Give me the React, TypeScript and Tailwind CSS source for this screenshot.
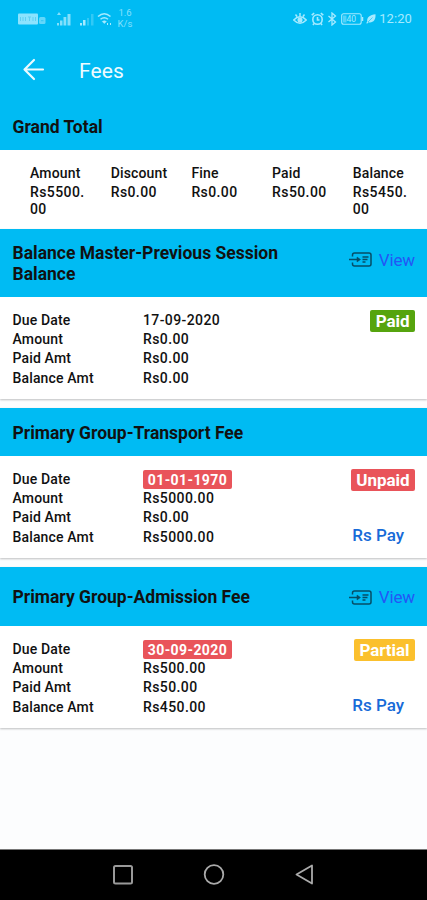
type Status = "Paid" | "Unpaid" | "Partial";

type Fee = {
  title: string;
  dueDate: string;
  overdue: boolean;
  amount: string;
  paid: string;
  balance: string;
  status: Status;
  headerClass: string;
  viewClass: string;
};

const summary = [
  { label: "Amount", value: "Rs5500.00" },
  { label: "Discount", value: "Rs0.00" },
  { label: "Fine", value: "Rs0.00" },
  { label: "Paid", value: "Rs50.00" },
  { label: "Balance", value: "Rs5450.00" },
];

const fees: Fee[] = [
  {
    title: "Balance Master-Previous Session Balance",
    dueDate: "17-09-2020",
    overdue: false,
    amount: "Rs0.00",
    paid: "Rs0.00",
    balance: "Rs0.00",
    status: "Paid",
    headerClass: "h-[68px]",
    viewClass: "-mt-[7px]",
  },
  {
    title: "Primary Group-Transport Fee",
    dueDate: "01-01-1970",
    overdue: true,
    amount: "Rs5000.00",
    paid: "Rs0.00",
    balance: "Rs5000.00",
    status: "Unpaid",
    headerClass: "h-12",
    viewClass: "",
  },
  {
    title: "Primary Group-Admission Fee",
    dueDate: "30-09-2020",
    overdue: true,
    amount: "Rs500.00",
    paid: "Rs50.00",
    balance: "Rs450.00",
    status: "Partial",
    headerClass: "h-[59px]",
    viewClass: "mt-[1px]",
  },
];

const statusClass: Record<Status, string> = {
  Paid: "bg-[#56a40e]",
  Unpaid: "bg-[#e9545a]",
  Partial: "bg-[#fbc02d]",
};

export default function App() {
  return (
    <div className="flex h-[900px] w-[427px] flex-col overflow-hidden bg-[#fcfdfe] font-['Roboto',sans-serif] text-[#111]">
      <StatusBar />
      <header className="flex h-[66px] shrink-0 items-center bg-[#00bbf3] pl-[22px] text-white">
        <svg className="h-6 w-6" viewBox="0 0 24 24" fill="none" stroke="#eafaff" strokeWidth="2.200" strokeLinecap="round" strokeLinejoin="round">
          <path d="M21 12.500H2.500M12 3 2.500 12.500 12 22" />
        </svg>
        <h1 className="ml-[33px] pt-[3px] text-[21px] leading-6 tracking-[0.1px] text-[#effbff]">Fees</h1>
      </header>
      <Summary />
      <main className="flex flex-col gap-[9px]">
        {fees.map((fee) => (
          <FeeCard key={fee.title} fee={fee} />
        ))}
      </main>
      <NavBar />
    </div>
  );
}

function StatusBar() {
  return (
    <div className="flex h-9 shrink-0 items-center bg-[#00bbf3] pt-[1px] pr-[15px] pl-[18px] text-[#a5eaff]">
      {/* VoLTE badge */}
      <svg className="h-3 w-7" viewBox="0 0 28 12">
        <rect x="0" y="0.500" width="20" height="11" rx="1" fill="currentColor" opacity="0.85" />
        <path d="M2.500 4v4M5 4v4M7.500 4v4M10 4h3M11.500 4v4M15 4v4M17.500 4v4" stroke="#5fd0f3" strokeWidth="1" fill="none" />
        <rect x="21" y="4" width="6.500" height="7" rx="1.500" fill="currentColor" opacity="0.6" />
        <path d="M23 7.700h2.500" stroke="#35c6f2" />
      </svg>
      <svg className="ml-[10px] h-[14px] w-4" viewBox="0 0 16 14" fill="currentColor" opacity="0.8">
        <path d="M3 0l2 3H1zM1 11h2v2.500H1zM4 8.500h2.500v5H4zM7.500 5h2.800v8.500H7.500zM11.500 2h3v11.500h-3z" />
      </svg>
      <svg className="ml-2 h-[14px] w-4" viewBox="0 0 16 14" fill="currentColor">
        <path d="M0 13.500h2V11H0zM3 13.500h2.500V8H3z" />
        <path d="M7 13.500h2V6H7zM11 13.500h2.500V2H11z" opacity="0.3" />
      </svg>
      <svg className="ml-[1px] h-[14px] w-4" viewBox="0 0 16 14" fill="none" stroke="currentColor" strokeWidth="1.500">
        <path d="M1 4.500c4-3.600 8.500-3.600 12.500 0M3.500 7.300c2.500-2.100 5-2.100 7.500 0" />
        <path d="M5.300 9.500q2-1.500 4 0l-2 2z" fill="currentColor" strokeWidth="0.600" />
        <path d="M10.500 11v2M13.500 11v2" strokeWidth="1" />
      </svg>
      <div className="ml-1 w-4 text-center text-[9.500px] leading-[10.500px] opacity-80">
        <div>1.6</div>
        <div>K/s</div>
      </div>
      <div className="ml-auto flex items-center">
        {/* eye comfort */}
        <svg className="h-[14px] w-[14px]" viewBox="0 0 14 14" fill="none" stroke="currentColor" strokeWidth="1.500">
          <path d="M0.700 8q6.300-6.500 12.600 0-6.300 6.500-12.600 0zM7 1v3M2.500 2.500l1.500 2M11.500 2.500l-1.500 2" />
          <circle cx="7" cy="8" r="1.800" fill="currentColor" />
        </svg>
        <svg className="ml-1 h-[14px] w-[13px]" viewBox="0 0 13 14" fill="none" stroke="currentColor" strokeWidth="1.600">
          <circle cx="6.500" cy="7.500" r="4.700" />
          <path d="M6.500 5v3h2M0.700 3.200l2.500-2M12.300 3.200l-2.500-2M3 11.500l-1 1.500M10 11.500l1 1.500" />
        </svg>
        <svg className="ml-[3px] h-[14px] w-[10px]" viewBox="0 0 10 14" fill="none" stroke="currentColor" strokeWidth="1.300">
          <path d="M1.500 4l7 6L5 13V1l3.500 3-7 6" />
        </svg>
        <svg className="ml-1 h-3 w-[23px]" viewBox="0 0 23 12">
          <rect x="0.700" y="0.700" width="19.500" height="10.600" rx="2" fill="none" stroke="currentColor" strokeWidth="1.100" />
          <path d="M21.500 4v4" stroke="currentColor" strokeWidth="1.500" />
          <rect x="2" y="2.500" width="3.500" height="7" fill="currentColor" opacity="0.500" />
          <text x="5.500" y="9" fontSize="8.500" fill="currentColor" fontFamily="Roboto">40</text>
        </svg>
        <svg className="ml-[2px] h-[10px] w-[10px]" viewBox="0 0 10 10" fill="currentColor">
          <path d="M9.500 0.300C10 6 7 9.300 2.500 8.300L1 9.700 0.300 9l1-1.500C0.500 3.500 4 1 9.500 0.300z" />
          <path d="M2 8l4.500-4.500" stroke="#00bbf3" strokeWidth="0.600" />
        </svg>
        <span className="ml-[3px] text-[13px] leading-4 tracking-[0.1px]">12:20</span>
      </div>
    </div>
  );
}

function Summary() {
  return (
    <section className="shrink-0">
      <h2 className="flex h-12 items-center bg-[#00bbf3] px-[12.500px] pt-[3px] text-[17.500px] font-bold">Grand Total</h2>
      <div className="flex h-[79px] bg-white pt-[13px] pl-[30px] text-[14px] font-medium">
        {summary.map(({ label, value }) => (
          <div key={label} className="w-[80.700px] shrink-0">
            <div className="leading-[20px] tracking-[0.150px]">{label}</div>
            <div className="w-[58px] pt-[1px] leading-[16.500px] tracking-[0.400px] break-all">{value}</div>
          </div>
        ))}
      </div>
    </section>
  );
}

function FeeCard({ fee }: { fee: Fee }) {
  return (
    <section className="bg-white shadow-[0_1px_2px_0px_rgba(0,0,0,0.25)]">
      <div className={`flex items-center justify-between bg-[#00bbf3] pr-3 pl-[12.500px] ${fee.headerClass}`}>
        <h2 className="w-[290px] pt-[2px] text-[17.500px] leading-[21px] font-bold">{fee.title}</h2>
        {fee.status !== "Unpaid" && (
          <button className={`flex items-center gap-[7px] text-[17px] leading-6 tracking-[-0.150px] text-[#2356f6] ${fee.viewClass}`}>
            <ViewIcon />
            View
          </button>
        )}
      </div>
      <div className="flex h-[102px] justify-between pt-[13px] pr-3 pl-[12.500px]">
        <dl className="grid auto-rows-[19.400px] grid-cols-[130.500px_auto] items-center pt-[0.500px] text-[14px] leading-[19.400px] font-medium tracking-[0.4px]">
          <dt className="tracking-[0.150px]">Due Date</dt>
          <dd>
            {fee.overdue ? (
              <span className="block h-[19px] w-[89px] rounded-[2px] bg-[#e9545a] text-center leading-5 font-bold text-white">{fee.dueDate}</span>
            ) : (
              fee.dueDate
            )}
          </dd>
          <dt className="tracking-[0.150px]">Amount</dt>
          <dd>{fee.amount}</dd>
          <dt className="tracking-[0.150px]">Paid Amt</dt>
          <dd>{fee.paid}</dd>
          <dt className="tracking-[0.150px]">Balance Amt</dt>
          <dd>{fee.balance}</dd>
        </dl>
        <div className="flex flex-col items-end">
          <span className={`h-[22px] rounded-[2px] px-[5.500px] text-[17px] leading-[23px] font-bold tracking-[-0.050px] text-white ${statusClass[fee.status]}`}>
            {fee.status}
          </span>
          {fee.status !== "Paid" && (
            <button className="mt-[34px] mr-[11px] text-[17px] leading-5 font-medium text-[#186bd8]">Rs Pay</button>
          )}
        </div>
      </div>
    </section>
  );
}

function ViewIcon() {
  return (
    <svg className="h-[15px] w-[23px]" viewBox="0 0 23 15" fill="none" stroke="#064d66" strokeWidth="1.500">
      <path d="M3.500 4.500V3q0-2 2-2H20q2 0 2 2v9q0 2-2 2H5.500q-2 0-2-2v-1.500" />
      <path d="M0 7.500h10M13.500 5H19.500M13.500 7.500h5M13.500 10h3" />
      <path d="M8 5l3.500 2.500L8 10z" fill="#064d66" strokeWidth="0.500" />
    </svg>
  );
}

function NavBar() {
  return (
    <nav className="mt-auto flex h-[51px] shrink-0 items-center justify-between border-t border-[#777] bg-black pr-[112px] pl-[112px]">
      <svg className="h-[22px] w-[22px]" viewBox="0 0 22 22" fill="none" stroke="#999" strokeWidth="2">
        <rect x="2" y="2" width="18" height="17.500" rx="1.500" />
      </svg>
      <svg className="h-[22px] w-[22px]" viewBox="0 0 22 22" fill="none" stroke="#aaa" strokeWidth="1.800">
        <circle cx="11" cy="10.500" r="9.300" />
      </svg>
      <svg className="h-[22px] w-[22px]" viewBox="0 0 22 22" fill="none" stroke="#aaa" strokeWidth="1.800" strokeLinejoin="round">
        <path d="M19 1.500v18L3.500 10.500z" />
      </svg>
    </nav>
  );
}
